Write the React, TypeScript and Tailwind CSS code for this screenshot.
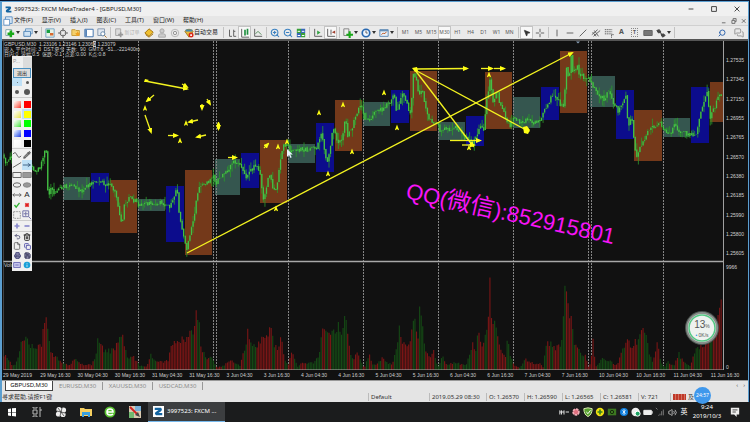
import React from "react";
import {
  Bluetooth,
  Copy,
  File,
  MessagesSquare,
  MousePointer2,
  Pencil,
  Printer,
  Save,
  Search,
  Trash2,
  Undo2,
  Volume2,
  ZoomIn,
  ZoomOut,
} from "lucide-react";

const menus = ["文件(F)", "显示(V)", "插入(I)", "图表(C)", "工具(T)", "窗口(W)", "帮助(H)"];
const periods = ["M1", "M5", "M15", "M30", "H1", "H4", "D1", "W1", "MN"];
const tabs = ["GBPUSD,M30", "EURUSD,M30", "XAUUSD,M30", "USDCAD,M30"];
const prices = [
  "1.27535", "1.27345", "1.27150", "1.26955", "1.26765", "1.26570",
  "1.26380", "1.26185", "1.25990", "1.25800", "1.25605",
];
const times = [
  "29 May 2019", "29 May 16:30", "30 May 04:30", "30 May 16:30", "31 May 04:30",
  "31 May 16:30", "3 Jun 04:30", "3 Jun 16:30", "4 Jun 04:30", "4 Jun 16:30",
  "5 Jun 04:30", "5 Jun 16:30", "6 Jun 04:30", "6 Jun 16:30", "7 Jun 04:30",
  "7 Jun 16:30", "10 Jun 04:30", "10 Jun 16:30", "11 Jun 04:30", "11 Jun 16:30",
];

const TEAL = "#35564f";
const BLUE = "#0c0c8c";
const BROWN = "#74391a";

// session boxes: x, y, width, height, colour
const sessions: [number, number, number, number, string][] = [
  [63, 177, 27, 23, TEAL], [91, 173, 18, 29, BLUE], [110, 180, 27, 53, BROWN],
  [138, 199, 27, 12, TEAL], [166, 186, 18, 56, BLUE], [185, 170, 27, 85, BROWN],
  [215, 159, 25, 36, TEAL], [241, 153, 18, 35, BLUE], [260, 140, 27, 63, BROWN],
  [288, 144, 27, 19, TEAL], [316, 123, 18, 49, BLUE], [335, 100, 27, 51, BROWN],
  [363, 102, 27, 24, TEAL], [391, 90, 18, 33, BLUE], [410, 71, 27, 60, BROWN],
  [438, 122, 27, 18, TEAL], [466, 116, 18, 30, BLUE], [485, 72, 27, 57, BROWN],
  [513, 97, 27, 31, TEAL], [541, 87, 18, 33, BLUE], [560, 51, 27, 62, BROWN],
  [590, 76, 25, 31, TEAL], [616, 90, 18, 49, BLUE], [634, 110, 28, 51, BROWN],
  [663, 118, 27, 19, TEAL], [691, 87, 18, 56, BLUE], [710, 82, 13, 40, BROWN],
];

const days = [63.5, 138.5, 213.5, 216.5, 288.5, 363.5, 438.5, 513.5, 588.5, 591.5, 663.5];

const priceLine = [
  [3, 157], [6, 162], [10, 156], [15, 159], [32, 165], [36, 174], [40, 166], [44, 154],
  [46, 148], [48, 196], [51, 188], [55, 194], [60, 189], [66, 186], [72, 184], [77, 188],
  [82, 192], [88, 185], [92, 182], [97, 180], [102, 182], [108, 184], [113, 188], [117, 198],
  [119, 210], [122, 226], [124, 204], [129, 197], [134, 200], [140, 205], [148, 203],
  [154, 206], [160, 202], [166, 205], [170, 206], [174, 196], [177, 188], [179, 212],
  [183, 234], [187, 249], [190, 235], [194, 218], [197, 195], [200, 186], [205, 184],
  [210, 180], [213, 174], [216, 183], [220, 178], [225, 174], [230, 166], [234, 160],
  [237, 161], [241, 168], [247, 178], [252, 168], [258, 165], [261, 180], [263, 200],
  [266, 188], [269, 170], [272, 185], [275, 193], [278, 178], [280, 160], [283, 146],
  [287, 144], [290, 150], [297, 149], [304, 149], [312, 149], [316, 148], [319, 140],
  [321, 132], [324, 148], [327, 163], [331, 142], [333, 126], [338, 142], [342, 138],
  [345, 118], [348, 136], [352, 128], [357, 112], [361, 105], [365, 118], [368, 120],
  [374, 114], [382, 109], [388, 104], [392, 98], [394, 93], [397, 114], [400, 98],
  [403, 93], [407, 105], [411, 114], [413, 72], [416, 78], [419, 98], [422, 86],
  [425, 108], [430, 120], [436, 122], [440, 130], [445, 127], [450, 130], [455, 126],
  [460, 130], [464, 138], [468, 140], [472, 142], [476, 138], [480, 125], [484, 128],
  [487, 97], [490, 80], [493, 101], [497, 91], [500, 103], [505, 115], [510, 125],
  [514, 116], [520, 124], [526, 119], [534, 122], [541, 118], [546, 108], [551, 98],
  [556, 96], [560, 104], [564, 108], [566, 66], [569, 77], [571, 56], [573, 73],
  [577, 66], [580, 75], [584, 76], [588, 78], [593, 86], [598, 92], [604, 100],
  [609, 90], [613, 104], [618, 110], [622, 105], [626, 95], [628, 125], [632, 118],
  [634, 138], [636, 158], [640, 148], [644, 138], [650, 128], [656, 125], [660, 122],
  [665, 130], [670, 133], [675, 125], [681, 131], [687, 134], [692, 135], [696, 134],
  [699, 118], [702, 110], [705, 96], [707, 88], [710, 117], [714, 108], [718, 98], [723, 93],
];

const volumeLine = [
  [4, 15], [8, 14], [12, 5], [16, 6], [19, 20], [23, 36], [26, 35], [30, 28], [34, 24],
  [37, 26], [41, 25], [43, 40], [46, 62], [48, 42], [50, 25], [53, 18], [58, 12], [64, 7],
  [70, 5], [76, 14], [80, 7], [86, 6], [92, 6], [96, 18], [98, 37], [101, 25], [106, 22],
  [112, 22], [118, 28], [122, 44], [125, 25], [128, 12], [134, 14], [140, 5], [147, 4],
  [150, 17], [156, 10], [162, 9], [168, 10], [172, 32], [178, 28], [182, 36], [188, 33],
  [191, 47], [194, 40], [196, 60], [199, 54], [201, 22], [206, 15], [212, 12], [217, 3],
  [222, 4], [228, 9], [233, 10], [240, 4], [245, 25], [248, 42], [252, 32], [256, 24],
  [260, 34], [266, 36], [271, 46], [274, 30], [278, 22], [281, 37], [284, 15], [288, 4],
  [292, 22], [295, 14], [298, 3], [302, 8], [308, 8], [314, 8], [319, 18], [322, 44],
  [327, 38], [332, 42], [336, 42], [338, 57], [340, 42], [343, 48], [346, 69], [348, 40],
  [350, 20], [354, 12], [357, 22], [361, 10], [364, 2], [370, 18], [372, 6], [376, 6],
  [382, 14], [388, 8], [392, 6], [396, 20], [399, 45], [402, 35], [406, 27], [410, 36],
  [412, 42], [414, 70], [416, 42], [418, 40], [420, 68], [423, 42], [426, 22], [431, 14],
  [434, 22], [438, 3], [443, 17], [446, 6], [453, 8], [460, 7], [466, 5], [470, 18],
  [472, 32], [476, 24], [479, 44], [483, 24], [487, 50], [488, 50], [490, 94], [492, 60],
  [496, 50], [500, 28], [506, 12], [508, 42], [510, 17], [514, 5], [520, 3], [525, 12],
  [532, 8], [540, 7], [543, 3], [546, 26], [550, 32], [555, 22], [562, 30], [563, 40],
  [565, 112], [567, 70], [571, 60], [574, 30], [580, 22], [586, 14], [588, 3], [591, 10],
  [593, 32], [596, 4], [602, 12], [610, 10], [617, 5], [622, 22], [627, 38], [632, 24],
  [638, 36], [643, 51], [646, 48], [649, 18], [652, 10], [655, 14], [657, 36], [660, 12],
  [664, 3], [668, 10], [674, 4], [679, 18], [684, 8], [690, 5], [695, 20], [700, 28],
  [706, 32], [712, 40], [716, 50], [718, 62], [721, 80], [724, 68],
];

const at = (line: number[][], x: number) => {
  const i = line.findIndex((p) => p[0] >= x);
  if (i <= 0) return line[i === 0 ? 0 : line.length - 1][1];
  const [x0, y0] = line[i - 1];
  const [x1, y1] = line[i];
  return y0 + ((y1 - y0) * (x - x0)) / (x1 - x0);
};

const noise = (n: number) => {
  const s = Math.sin(n * 127.1) * 43758.5453;
  return s - Math.floor(s);
};

const bars = Array.from({ length: 460 }, (_, i) => {
  const x = 4 + i * 1.5625;
  const open = at(priceLine, x - 1.6) + (noise(i) - 0.5) * 5;
  const close = at(priceLine, x) + (noise(i + 1) - 0.5) * 5;
  return {
    x,
    open,
    close,
    high: Math.min(open, close) - noise(i + 500) ** 3 * 8,
    low: Math.max(open, close) + noise(i + 900) ** 3 * 8,
    volume: Math.max(1, at(volumeLine, x) * (0.75 + noise(i + 300) * 0.28)),
    up: noise(Math.floor(i / 2) + 70) > 0.55,
  };
});

const arrows = [
  [187, 253, 572, 53], [145, 81, 187, 89], [415, 69, 467, 68.5], [415, 70, 528, 131],
  [415, 70, 473, 146], [450, 140.5, 480, 140.5], [462, 145, 474, 145], [481, 68.5, 492, 68.5],
  [494, 68.5, 504, 68.5], [154, 95, 147, 101], [145, 115, 151, 132], [168, 135.5, 177, 135.5],
  [198, 120, 189, 122], [206, 135, 197, 137], [207, 99, 210, 104], [202, 104, 202, 109],
  [228, 157.5, 236, 157.5], [182, 84, 187, 87], [218.5, 122, 218.5, 129], [264, 148, 268, 144],
];
const marks = [
  [145, 108.5], [186, 123.5], [180, 141], [278, 147], [287, 142], [276, 209], [319, 113],
  [328, 174], [352, 152], [343, 105], [384, 93], [397, 128], [489, 75], [469, 148],
];

const Chart = () => (
  <svg viewBox="3 41 720 329" className="block min-w-0 flex-1 bg-[#111111]" role="img" aria-label="GBPUSD,M30">
    <defs>
      <marker id="head" markerUnits="userSpaceOnUse" markerWidth="6" markerHeight="5" refX="4" refY="2.5" orient="auto">
        <path d="M0 0L6 2.5L0 5Z" fill="#ffff14" />
      </marker>
    </defs>
    {sessions.map(([x, y, w, h, fill]) => (
      <rect key={x} x={x} y={y} width={w} height={h} fill={fill} />
    ))}
    {days.map((x) => (
      <path key={x} d={`M${x} 41V370`} stroke="#858585" strokeWidth="1" strokeDasharray="2 1" />
    ))}
    {bars.map((b) => (
      <g key={b.x}>
        <path d={`M${b.x} 370V${370 - b.volume}`} stroke={b.up ? "#154a15" : "#7c1616"} strokeWidth="1.1" />
        <path d={`M${b.x} ${b.high}V${b.low}`} stroke="#2a9a2a" strokeWidth="0.8" />
        <path d={`M${b.x} ${b.open}V${b.close + 0.6}`} stroke="#45c045" strokeWidth="1.3" />
      </g>
    ))}
    <path d="M3 261.5H723" stroke="#a8a8a8" strokeWidth="1.6" />
    <path d="M3 370H723" stroke="#b0b0b0" strokeWidth="1" />
    <path d="M3.5 41V370" stroke="#666" strokeWidth="0.6" />
    {arrows.map(([x1, y1, x2, y2]) => (
      <path
        key={`${x1}-${y1}-${x2}`}
        d={`M${x1} ${y1}L${x2} ${y2}`}
        stroke="#f4f420"
        strokeWidth="1.3"
        markerEnd="url(#head)"
      />
    ))}
    {marks.map(([x, y]) => (
      <path
        key={`${x}-${y}`}
        d={`M${x - 1.5} ${y + 2}L${x} ${y - 2}L${x + 1.5} ${y + 2}M${x - 1} ${y + 0.6}H${x + 1}`}
        stroke="#ffff14"
        strokeWidth="1.1"
        fill="none"
      />
    ))}
    <path d="M144 82l1-3 4 1-3 2zM412 68l5-1 1 4-3 1zM523 127l4-1 3 4-2 4-4-1zM217 124l1.500-2 1.500 2v4l-1.500 2-1.500-2z" fill="#ffff14" />
    <path d="M287 149v8l2-2 1.500 3 1.200-.8-1.500-2.700h2.600z" fill="#e8f4ff" />
    <path d="M576 41.500h4l-2 2z" fill="#8aa0b8" />
    <g transform="translate(405 198) rotate(12.500)" fill="#f714f7">
      <text fontSize="22" fontFamily="'Liberation Sans', 'Noto Sans CJK SC', sans-serif">
        QQ(<tspan fontSize="24">微信</tspan>):852915801
      </text>
    </g>
  </svg>
);

const Ico = ({ children }: { children: React.ReactNode }) => (
  <svg viewBox="0 0 12 12" className="size-[10px] shrink-0" fill="none" stroke="#666" strokeWidth="1.2">
    {children}
  </svg>
);

const Tool = ({ label, drop, on, children }: any) => (
  <button
    aria-label={label}
    className={`flex h-[13px] shrink-0 items-center justify-center ${drop ? "w-[18px]" : "w-[13px]"} ${
      on ? "border border-[#c4c4c4] bg-[#f8f8f8]" : ""
    }`}
  >
    {children}
    {drop && (
      <svg viewBox="0 0 4 3" className="ml-px h-[3px] w-[4px]">
        <path d="M0 0h4L2 3z" fill="#333" />
      </svg>
    )}
  </button>
);

const Sep = () => (
  <span className="flex w-[4px] shrink-0 justify-center">
    <span className="h-[11px] w-px bg-[#c2c2c2]" />
  </span>
);

const Toolbar = () => (
  <div className="flex h-[14px] items-center overflow-hidden border-t border-[#d0d0d0] bg-[#eaeaea] pl-px text-[5px] text-[#555]">
    <Tool label="新图表" drop>
      <Ico>
        <path d="M1 2h7v7H1z" fill="#fff" stroke="#8aa" />
        <path d="M7 3v8M3 7h8" stroke="#18a818" strokeWidth="3" />
      </Ico>
    </Tool>
    <Tool label="配置文件" drop>
      <Ico>
        <path d="M3 1h8v6H3z" fill="#dbeaf6" stroke="#6f9cc4" />
        <path d="M1 4h8v6H1z" fill="#cfe3f4" stroke="#5588b8" />
      </Ico>
    </Tool>
    <Sep />
    <Tool label="市场报价">
      <Ico>
        <path d="M1 1h10v10H1z" fill="#e6f2e6" stroke="#7aa8c8" />
        <path d="M2 2h4v4H2z" fill="#18a040" stroke="none" />
        <path d="M6 6h4v3H6z" fill="#d86a30" stroke="none" />
      </Ico>
    </Tool>
    <Tool label="数据窗口">
      <Ico>
        <circle cx="6" cy="6" r="3.500" />
        <path d="M6 0v4M6 8v4M0 6h4M8 6h4" />
      </Ico>
    </Tool>
    <Tool label="导航">
      <Ico>
        <path d="M1 2h4l1 1h4v6H1z" fill="#f4cf6a" stroke="#c8a040" />
        <path d="M8 4l1 2 2 .3-1.500 1.500.4 2.200L8 9l-2 1 .4-2.200L5 6.300 7 6z" fill="#f0a020" stroke="none" />
      </Ico>
    </Tool>
    <Tool label="终端">
      <Ico>
        <path d="M1 1.500h10v9H1z" fill="#fff" stroke="#4878b0" />
        <path d="M2.500 2v8" stroke="#4878b0" strokeWidth="2" />
      </Ico>
    </Tool>
    <Tool label="策略测试">
      <Ico>
        <path d="M1 1h8v8H1z" fill="#e2e8f0" stroke="#8a9cb0" />
        <circle cx="7" cy="7" r="2.500" fill="#fff" stroke="#68a" />
        <path d="M9 9l2.500 2.500" stroke="#b07830" />
      </Ico>
    </Tool>
    <Sep />
    <button className="flex w-[30px] shrink-0 items-center justify-center whitespace-nowrap text-[#b0b0b0]">
      <Ico>
        <path d="M2 1h6v8H2z" fill="#ddd" stroke="#aaa" />
        <path d="M8 5v6M5 8h6" stroke="#999" strokeWidth="2" />
      </Ico>
      新订单
    </button>
    <Tool label="编辑器">
      <Ico>
        <path d="M6 1l5 4-5 5-5-4z" fill="#f0c030" stroke="#a87810" />
        <path d="M2 8l4 3 5-4" stroke="#a87810" />
      </Ico>
    </Tool>
    <Tool label="打印">
      <Ico>
        <circle cx="6" cy="3.500" r="2.500" fill="#ccc" stroke="#aaa" />
        <path d="M2 11V8l2-1h4l2 1v3z" fill="#ccc" stroke="#aaa" />
      </Ico>
    </Tool>
    <Tool label="信号">
      <Ico>
        <circle cx="6" cy="6" r="4.500" stroke="#bbb" />
        <circle cx="6" cy="6" r="2" stroke="#999" />
      </Ico>
    </Tool>
    <button className="flex w-[40px] shrink-0 items-center justify-center whitespace-nowrap text-[6px] text-[#222]">
      <Ico>
        <path d="M1 4q5-5 10 0L6 11z" fill="#e8b83c" stroke="#a88020" />
        <path d="M2 3h8" stroke="#48a" strokeWidth="2.500" />
        <circle cx="8.500" cy="8.500" r="3" fill="#d82818" stroke="none" />
        <path d="M7.500 7.500h2v2h-2z" fill="#fff" stroke="none" />
      </Ico>
      自动交易
    </button>
    <Sep />
    <Tool label="柱状图">
      <Ico>
        <path d="M3 2v8h3M8 2v8h3M8 4h2" />
      </Ico>
    </Tool>
    <Tool label="蜡烛图" on>
      <Ico>
        <path d="M2 1v10h9" />
        <path d="M6 2v7M9 1v7" stroke="#209040" strokeWidth="2" />
      </Ico>
    </Tool>
    <Tool label="折线图">
      <Ico>
        <path d="M2 1v9h9" />
        <path d="M3 7l3-3 4 4" stroke="#5a9060" />
      </Ico>
    </Tool>
    <Sep />
    <Tool label="放大">
      <ZoomIn className="size-[10px]" color="#3a80c0" strokeWidth={2.5} />
    </Tool>
    <Tool label="缩小">
      <ZoomOut className="size-[10px]" color="#3a80c0" strokeWidth={2.5} />
    </Tool>
    <Tool label="平铺窗口">
      <Ico>
        <path d="M1 1h5v5H1zM6 6h5v5H6z" fill="#38a038" stroke="none" />
        <path d="M6 1h5v5H6zM1 6h5v5H1z" fill="#3868b8" stroke="none" />
        <path d="M2 4h3M7 4h3M2 9h3M7 9h3" stroke="#fff" />
      </Ico>
    </Tool>
    <Sep />
    <Tool label="自动滚动">
      <Ico>
        <path d="M2 1v9h9" />
        <path d="M5 3l4 2.500L5 8z" fill="#30a040" stroke="none" />
      </Ico>
    </Tool>
    <Tool label="图表平移" on>
      <Ico>
        <path d="M2 1v9h9M6 2v6" />
        <path d="M11 3v4L7 5z" fill="#a04030" stroke="none" />
      </Ico>
    </Tool>
    <Sep />
    <Tool label="指标" drop>
      <Ico>
        <path d="M1 1h6v8H1z" fill="#eee" stroke="#888" />
        <path d="M8 4v8M4 8h8" stroke="#18a818" strokeWidth="2.500" />
      </Ico>
    </Tool>
    <Tool label="周期" drop>
      <Ico>
        <circle cx="6" cy="6" r="4.500" fill="#eef6ff" stroke="#2868b0" strokeWidth="2" />
        <path d="M6 3v3h2" />
      </Ico>
    </Tool>
    <Tool label="模板" drop>
      <Ico>
        <path d="M1 2h10v8H1z" fill="#e8f0f8" stroke="#6890b8" />
        <path d="M1 3h10" stroke="#6890b8" strokeWidth="2" />
        <path d="M3 8l2-2 1 1 3-2" stroke="#c06030" />
      </Ico>
    </Tool>
    <Sep />
    {periods.map((p) => (
      <Tool key={p} label={p} on={p === "M30"}>
        {p}
      </Tool>
    ))}
    <Sep />
    <Tool label="光标" on>
      <MousePointer2 className="size-[8px]" fill="#333" color="#333" />
    </Tool>
    <Tool label="十字线">
      <Ico>
        <path d="M6 1v4M6 7v4M1 6h4M7 6h4" />
      </Ico>
    </Tool>
    <Sep />
    <Tool label="垂直线">
      <Ico>
        <path d="M6 2v8" />
      </Ico>
    </Tool>
    <Tool label="水平线">
      <Ico>
        <path d="M2 6h8" />
      </Ico>
    </Tool>
    <Tool label="趋势线">
      <Ico>
        <path d="M2 10l8-8" />
      </Ico>
    </Tool>
    <Tool label="通道">
      <Ico>
        <path d="M1 8l7-6M3 10l8-7M4 3l5 7M2 5l4 5" />
      </Ico>
    </Tool>
    <Tool label="斐波纳契">
      <Ico>
        <path d="M1 2h9M1 4.500h9M1 7h9M9 8v4M9 8h3" strokeDasharray="1.500 .7" />
      </Ico>
    </Tool>
    <Tool label="文字">
      <span className="text-[7px] font-bold">A</span>
    </Tool>
    <Tool label="文字标签">
      <span className="border border-dotted border-[#888] px-px text-[5px] leading-[7px] font-bold">T</span>
    </Tool>
    <Tool label="矩形">
      <Ico>
        <path d="M1 3h10v6H1z" fill="#777" />
      </Ico>
    </Tool>
    <Tool label="箭头" drop>
      <Ico>
        <path d="M1 3l3-1 2 3-3 1zM6 8l3-1 2 2-3 2zM4 5l4 3" fill="#444" stroke="#444" />
      </Ico>
    </Tool>
    <Sep />
    <div className="ml-auto flex shrink-0 items-center gap-2 pr-1">
      <button aria-label="搜索">
        <Search className="block size-[8px] -scale-x-100" color="#3468b0" strokeWidth={3} />
      </button>
      <button aria-label="聊天">
        <MessagesSquare className="block size-[10px]" color="#888" />
      </button>
    </div>
  </div>
);

const swatches = [
  ["from-white to-[#f03030]", "bg-[#ff0000]"],
  ["from-white to-[#e8e030]", "bg-[#ffff00]"],
  ["from-white to-[#20e020]", "bg-[#00ff00]"],
  ["from-white to-[#3030e0]", "bg-[#0000ff]"],
  ["from-white to-[#f4f4f4]", "bg-black"],
];

const shapes: [string, React.ReactNode][] = [
  ["曲线", <Ico><path d="M1 5q3-4 5 1t5 1" /></Ico>],
  ["画笔", <Pencil className="size-[8px]" color="#333" fill="#888" />],
  ["直线", <Ico><path d="M1 9l10-6" /></Ico>],
  ["箭头", <Ico><path d="M1 6h9M7 4l3 2-3 2" stroke="#468" /></Ico>],
  ["矩形", <Ico><path d="M1 3h10v6H1z" /></Ico>],
  ["实心矩形", <Ico><path d="M1 3h10v6H1z" fill="#999" stroke="#888" /></Ico>],
  ["椭圆", <Ico><ellipse cx="6" cy="6" rx="4.500" ry="2.600" /></Ico>],
  ["实心椭圆", <Ico><ellipse cx="6" cy="6" rx="4.500" ry="2.600" fill="#999" stroke="#888" /></Ico>],
  ["双箭头", <Ico><path d="M1 6h10M3 4L1 6l2 2M9 4l2 2-2 2" /></Ico>],
  ["文字", <span className="text-[8px] leading-none text-[#222]">A</span>],
  ["对勾", <Ico><path d="M3 6l2 2.500 4-5" stroke="#30b030" strokeWidth="1.600" /></Ico>],
  ["叉", <Ico><path d="M4 4l4 4M8 4l-4 4" stroke="#e02020" strokeWidth="2.200" /></Ico>],
  ["选择", <Ico><path d="M2 2h8v8H2z" stroke="#999" strokeDasharray="2 1" /></Ico>],
  ["缩放", <Ico><path d="M1 1h7v7H1zM4.500 2v5M2 4.500h5M8 8l3 3" stroke="#77a" /></Ico>],
];

const actions: [string, React.ReactNode][] = [
  ["撤销", <Undo2 className="size-[7px]" color="#557" strokeWidth={3} />],
  ["删除", <Trash2 className="size-[8px]" color="#333" strokeWidth={3} />],
  ["新建", <File className="size-[8px]" color="#444" />],
  ["复制", <Copy className="size-[7px]" color="#55a" strokeWidth={3} />],
  ["打印", <Printer className="size-[7px]" color="#447" fill="#88a" strokeWidth={3} />],
  ["保存", <Save className="size-[7px]" color="#335" fill="#88a" strokeWidth={3} />],
  ["屏幕", <Ico><path d="M2 3h8v6H2z" fill="#c8c8ee" stroke="#77b" /><path d="M4 6h4" stroke="#77b" /></Ico>],
  ["关于", <Ico><circle cx="6" cy="6" r="4" fill="#18a0d8" stroke="none" /><path d="M6 5.500v3M6 3.500v1" stroke="#bde" /></Ico>],
];

const cell = "flex min-h-0 items-center justify-center";

const Palette = () => (
  <div className="absolute top-[15px] left-[10px] flex h-[215px] w-[20px] flex-col bg-[#f0f0f0] text-[5px]">
    <div className="flex h-[12px] items-center">
      <span className="flex-1 pl-px text-[#999]">P...</span>
      <span className="h-[11px] w-[9px] bg-[#dcdcdc]" />
    </div>
    <button className="mx-px h-[10px] border border-[#4a90c0] bg-[#dcdcdc] leading-[8px] text-[#222]">退出</button>
    <div className="grid flex-2 grid-cols-2 border-b border-[#ccc]">
      {["size-[1px]", "size-[3px]", "size-[4px]", "size-[6px]"].map((s, i) => (
        <button key={s} aria-label={`${i + 1}`} className={`${cell} ${i === 0 ? "bg-[#bfe0f6]" : ""}`}>
          <span className={`${s} rounded-full bg-[#555]`} />
        </button>
      ))}
    </div>
    <div className="grid flex-5 grid-cols-2 border-b border-[#ccc] pt-px">
      {swatches.map(([soft, solid]) => (
        <React.Fragment key={solid}>
          <button aria-label="浅色" className={cell}>
            <span className={`size-[7px] bg-linear-to-br ${soft}`} />
          </button>
          <button aria-label="纯色" className={`${cell} ${solid === "bg-[#ffff00]" ? "bg-[#bfe0f6]" : ""}`}>
            <span className={`size-[7px] ${solid}`} />
          </button>
        </React.Fragment>
      ))}
    </div>
    <div className="grid flex-7 grid-cols-2 border-b border-[#ccc] pt-px">
      {shapes.map(([label, icon], i) => (
        <button key={label} aria-label={label} className={`${cell} ${i === 3 ? "bg-[#bfe0f6]" : ""}`}>
          {icon}
        </button>
      ))}
    </div>
    <div className="grid flex-1 grid-cols-2 border-b border-[#ccc]">
      <button aria-label="加粗" className={cell}>
        <Ico><path d="M6 3v6M3 6h6" stroke="#88c" strokeWidth="2" /></Ico>
      </button>
      <button aria-label="变细" className={cell}>
        <Ico><path d="M3 6h6" stroke="#88c" strokeWidth="2" /></Ico>
      </button>
    </div>
    <div className="grid flex-4 grid-cols-2">
      {actions.map(([label, icon]) => (
        <button key={label} aria-label={label} className={cell}>
          {icon}
        </button>
      ))}
    </div>
  </div>
);

const LogoZ = ({ className }: { className: string }) => (
  <svg viewBox="0 0 12 12" className={className}>
    <path d="M1 1h8q3 2 0 5L6 8h5v3H3Q0 9 2 7l4-3H1z" fill="#1464a0" />
  </svg>
);

const TitleBar = () => (
  <header className="flex h-[14px] items-center bg-[#f0f0f0] pl-[3px] text-[6px] text-[#222]">
    <LogoZ className="mr-[2px] size-[7px]" />
    <h1 className="text-[6px]">3997523: FXCM MetaTrader4 - [GBPUSD,M30]</h1>
    <div className="ml-auto flex gap-[13px] pr-[6px]">
      {[["最小化", "M1 5h8"], ["最大化", "M1 1h8v8H1z"], ["关闭", "M1 1l8 8M9 1L1 9"]].map(([label, d]) => (
        <button key={label} aria-label={label} className="w-[10px]">
          <svg viewBox="0 0 10 10" className="mx-auto size-[6px]" fill="none" stroke="#333" strokeWidth="1.500">
            <path d={d} />
          </svg>
        </button>
      ))}
    </div>
  </header>
);

const MenuBar = () => (
  <nav className="flex h-[9px] items-center bg-[#e6e6e6] pl-px text-[6px] leading-[9px] text-[#222]">
    <Ico>
      <path d="M3 1h8v8H3z" fill="#e0ecf8" stroke="#6898c8" />
      <path d="M1 4h7v7H1z" fill="#fff" stroke="#6898c8" />
    </Ico>
    <div className="ml-px flex gap-[9px]">
      {menus.map((m) => (
        <button key={m} className="whitespace-nowrap">
          {m}
        </button>
      ))}
    </div>
    <div className="ml-auto flex gap-1 pr-px text-[#666]">
      {[["最小化", "M1 8h6"], ["还原", "M1 4h5v5H1zM3 4V1h5v5H6"], ["关闭", "M1 2l6 6M7 2L1 8"]].map(([label, d]) => (
        <button key={label} aria-label={label}>
          <svg viewBox="0 0 9 10" className="size-[6px]" fill="none" stroke="#666" strokeWidth="1.500">
            <path d={d} />
          </svg>
        </button>
      ))}
    </div>
  </nav>
);

const quotes = ["O: 1.26570", "H: 1.26590", "L: 1.26565", "C: 1.26581"];

const Footer = () => (
  <footer className="bg-[#e4e4e4] text-[6px] text-[#333]">
    <div className="flex h-[12px] items-start border-t border-[#999] pl-[3px] text-[#8c8c8c]">
      {tabs.map((t, i) => (
        <button
          key={t}
          className={
            i === 0
              ? "h-[10px] w-[48px] border border-t-0 border-[#444] bg-white leading-[9px] text-[#111]"
              : "my-px h-[8px] w-[50px] border-r border-[#999] leading-[8px]"
          }
        >
          {t}
        </button>
      ))}
      <span className="ml-auto flex gap-[5px] pr-[3px] leading-[8px] text-[#555]">
        <span>‹</span>
        <span>›</span>
      </span>
    </div>
    <div className="flex h-[10px] items-center leading-[8px] whitespace-nowrap">
      <span className="flex-1">寻求帮助,请按F1键</span>
      <span className="w-[61px] border-l border-[#bbb] pl-[2px]">Default</span>
      <span className="w-[57px] border-l border-[#bbb] pl-[2px]">2019.05.29 08:30</span>
      {quotes.map((q) => (
        <span key={q} className="w-[38px] border-l border-[#bbb] pl-[2px]">
          {q}
        </span>
      ))}
      <span className="w-[32px] border-l border-[#bbb] pl-[2px]">V: 721</span>
      <span className="flex w-[78px] items-center gap-[2px] border-l border-[#bbb] pl-[2px]">
        <span className="h-[6px] w-[13px] bg-[repeating-linear-gradient(90deg,#c03828_0_2px,#d07060_2px_3px)]" />
        及
      </span>
    </div>
  </footer>
);

const tray: [string, React.ReactNode][] = [
  ["人脉", <Ico><path d="M1 4v5M3 4v5M1 6h5M8 6h4M6 4v5" stroke="#ddd" /></Ico>],
  ["花", <Ico><circle cx="6" cy="6" r="3.500" fill="#e07080" stroke="#f0b0b8" strokeDasharray="3 1" strokeWidth="2" /></Ico>],
  ["卫士", <Ico><path d="M6 1l5 1q0 7-5 9.500Q1 9 1 2z" fill="#58a030" stroke="#d8e8b0" /><path d="M4 6l2 2 3-4" stroke="#fff" /></Ico>],
  ["安全", <Ico><circle cx="6" cy="6" r="5" fill="#f0e010" stroke="none" /><path d="M6 3v6M3 6h6" stroke="#388020" strokeWidth="2" /></Ico>],
  ["显卡", <Ico><path d="M1 2h10v8H1z" fill="#3c7820" stroke="none" /><circle cx="6" cy="6" r="2" stroke="#162a0c" /></Ico>],
  ["蓝牙", <span className="rounded-full bg-[#1080e0] p-px"><Bluetooth className="size-[6px]" color="#fff" strokeWidth={3} /></span>],
  ["防护", <Ico><circle cx="5.500" cy="6" r="5" fill="#eee" stroke="none" /><circle cx="8" cy="8" r="3" fill="#18a060" stroke="#fff" /></Ico>],
  ["电池", <Ico><path d="M1 4h9v5H1z" fill="#eee" stroke="#eee" /><path d="M11 5v3" stroke="#eee" /></Ico>],
  ["网络", <Ico><path d="M1 1l2 2M4 10h1M6 10V8M8 10V5M10 10V3" stroke="#777" /></Ico>],
  ["音量", <Volume2 className="size-[9px]" color="#ddd" />],
  ["输入法", <span className="text-[7px] text-white">英</span>],
];

const pinned: [string, React.ReactNode][] = [
  ["开始", <path d="M2 3l3-.5V6H2zM6 2.300L10 2v4H6zM2 6.500h3V10l-3-.5zM6 6.500h4v4l-4-.5z" fill="#fff" />],
  ["任务视图", <path d="M2 1v1h4V1M2 11v-1h4v1M2 4h4v4H2zM9 1v10M9 4h2" fill="none" stroke="#bbb" />],
  ["风扇", <g fill="#eee"><circle cx="4" cy="3.500" r="2.600" /><circle cx="8.500" cy="4" r="2.600" /><circle cx="3.500" cy="8" r="2.600" /><circle cx="8" cy="8.500" r="2.600" /><path d="M2 5l8 2M7 2L5 10M3 2l6 8" stroke="#444" strokeWidth=".8" /></g>],
  ["资源管理器", <g><path d="M0 2h4l1 1h7v7H0z" fill="#f6cf60" /><path d="M2 6h8v5H8V9H4v2H2z" fill="#38a0e0" /></g>],
  ["浏览器", <g><circle cx="6" cy="6" r="5.500" fill="#58c030" /><path d="M3 6h6q0-3-3-3T3 6t3 3q2 0 3-1" fill="none" stroke="#fff" strokeWidth="1.600" /></g>],
  ["画图", <g><path d="M0 0h12v12H0z" fill="#d8c8b0" /><path d="M0 6h5v6H0z" fill="#70b870" /><path d="M6 0h6v5H6z" fill="#78b0d8" /><path d="M1 1l8 8" stroke="#d02020" strokeWidth="2" /><path d="M9 6l2 5-5-2z" fill="#444" /></g>],
];

const Taskbar = () => (
  <div className="flex h-[20px] items-center bg-[#1b1c1d] text-[6px] text-white">
    <div className="flex w-[148px] shrink-0 justify-between pr-[7px] pl-[6px]">
      {pinned.map(([label, icon]) => (
        <button key={label} aria-label={label}>
          <svg viewBox="0 0 12 12" className="size-[12px]">
            {icon}
          </svg>
        </button>
      ))}
    </div>
    <button className="flex h-full w-[77px] items-center gap-[3px] border-b border-[#76b9ed] bg-[#3c3e40] pl-[5px] whitespace-nowrap">
      <span className="bg-white p-px">
        <LogoZ className="size-[9px]" />
      </span>
      3997523: FXCM ...
    </button>
    <div className="ml-auto flex">
      {tray.map(([label, icon]) => (
        <button key={label} aria-label={label} className="flex w-[12px] items-center justify-center">
          {icon}
        </button>
      ))}
    </div>
    <div className="w-[34px] text-center leading-[9px]">
      <p>9:24</p>
      <p>2019/10/3</p>
    </div>
    <button aria-label="通知" className="mr-[10px] ml-[6px]">
      <svg viewBox="0 0 12 12" className="size-[10px]">
        <path d="M1 1h10v8H8v3L5 9H1z" fill="#eee" />
        <path d="M3 3.500h6M3 6h4" stroke="#333" />
      </svg>
    </button>
  </div>
);

const App = () => {
  return (
    <div className="bg-[#0a1630] pt-px font-['Noto_Sans','Noto_Sans_CJK_SC',sans-serif]">
      <div className="mr-px border-t border-r border-l-2 border-[#5c9fd0] bg-[#e4e4e4]">
        <TitleBar />
        <MenuBar />
        <Toolbar />
        <div className="h-[2px] bg-[#555]" />
        <main className="relative bg-[#111111] pl-px font-['Liberation_Sans','Noto_Sans_CJK_SC',sans-serif] text-[5px] text-[#d0d0d0]">
          <div className="flex">
            <Chart />
            <div className="flex w-[25px] shrink-0 flex-col border-l border-[#a0a0a0] pl-[2px]">
              <div className="flex flex-2 flex-col pt-[10px]">
                {prices.map((p) => (
                  <span key={p} className="flex flex-1 items-center">
                    {p}
                  </span>
                ))}
              </div>
              <div className="flex flex-1 flex-col justify-between leading-[6px]">
                <span>9966</span>
                <span>0</span>
              </div>
            </div>
          </div>
          <div className="flex h-[10px] leading-[10px] whitespace-nowrap">
            {times.map((t) => (
              <span key={t} className="w-0 flex-1">
                {t}
              </span>
            ))}
          </div>
          <div className="absolute top-px left-[2px] leading-[5px] whitespace-pre">
            <p>
              GBPUSD,M30  1.23106 1.23146 1.2306<span className="bg-[#ccc] text-black">0</span> 1.23079
            </p>
            <p>嵌入 平台时间: 3  DST:夏令 天数:  90  GMT:6  -51...-221400m</p>
            <p>日内:0  波幅:0.5  张跌:-0.1  点差:0.00  K点:0.8</p>
          </div>
          <span className="absolute top-[221px] left-[2px]">Volumes</span>
          <Palette />
          <div className="absolute right-[30px] bottom-[36px] flex size-[32px] flex-col items-center justify-center rounded-full border-2 border-[#8a8f8c] bg-[#eef2ef] text-[#555] ring-1 ring-[#4c5450]">
            <svg viewBox="0 0 28 28" className="absolute inset-0" fill="none">
              <circle cx="14" cy="14" r="13" stroke="#54c884" strokeWidth="1.500" />
            </svg>
            <p className="text-[10px] leading-[11px]">
              13<span className="text-[5px]">%</span>
            </p>
            <p className="leading-[6px]">
              <span className="text-[#3090e0]">•</span> 0K/s
            </p>
          </div>
        </main>
        <div className="relative">
          <Footer />
          <span className="absolute right-[37px] bottom-[-2px] flex size-[17px] items-center justify-center rounded-full bg-[#3f98ec] text-[5px] text-white">
            24:57
          </span>
        </div>
      </div>
      <Taskbar />
    </div>
  );
};

export default App;
